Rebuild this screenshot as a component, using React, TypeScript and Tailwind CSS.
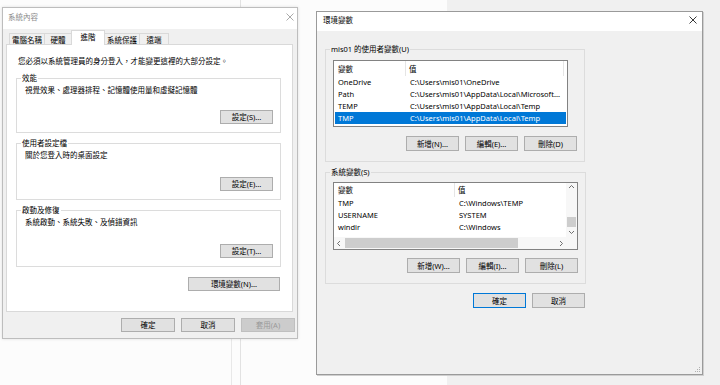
import React from "react";

type BtnKind = "normal" | "primary" | "disabled";

const btnKinds: Record<BtnKind, string> = {
  normal: "border-[#adadad] bg-[#e1e1e1] text-black",
  primary: "border-[#0078d7] bg-[#e1e1e1] text-black",
  disabled: "border-[#bfbfbf] bg-[#cccccc] text-[#9a9a9a]",
};

function Btn({
  label,
  size = "w-[54px] h-[14px]",
  kind = "normal",
}: {
  label: string;
  size?: string;
  kind?: BtnKind;
}) {
  return (
    <div className={`flex shrink-0 items-center justify-center border ${size} ${btnKinds[kind]}`}>
      {label}
    </div>
  );
}

function CloseIcon({ color }: { color: string }) {
  return (
    <svg width="8" height="8" viewBox="0 0 8 8" fill="none" stroke={color} strokeWidth="0.9">
      <path d="M0.5 0.5 L7.5 7.5 M7.5 0.5 L0.5 7.5" />
    </svg>
  );
}

function Chevron({ dir }: { dir: "up" | "down" | "left" | "right" }) {
  const d = {
    up: "M1 4 L3.5 1.5 L6 4",
    down: "M1 2 L3.5 4.5 L6 2",
    left: "M4 1 L1.5 3.5 L4 6",
    right: "M2 1 L4.5 3.5 L2 6",
  }[dir];
  return (
    <svg width="7" height="7" viewBox="0 0 7 7" fill="none" stroke="#606060" strokeWidth="0.9">
      <path d={d} />
    </svg>
  );
}

function Group({
  title,
  className,
  children,
}: {
  title: string;
  className: string;
  children: React.ReactNode;
}) {
  return (
    <fieldset className={`border border-[#dcdcdc] ${className}`}>
      <legend className="ml-[4px] px-[1px] leading-[10px]">{title}</legend>
      {children}
    </fieldset>
  );
}

const tabs = [
  { label: "電腦名稱", w: "w-[36px]" },
  { label: "硬體", w: "w-[28px]" },
  { label: "進階", w: "w-[34px]", active: true },
  { label: "系統保護", w: "w-[36px]" },
  { label: "遠端", w: "w-[30px]" },
];

function SystemProperties() {
  const sections = [
    { title: "效能", text: "視覺效果、處理器排程、記憶體使用量和虛擬記憶體", btn: "設定(S)...", box: "mt-[7px] h-[60px]", inner: "h-[49px]" },
    { title: "使用者設定檔", text: "關於您登入時的桌面設定", btn: "設定(E)...", box: "mt-[5px] h-[62px]", inner: "h-[51px]" },
    { title: "啟動及修復", text: "系統啟動、系統失敗、及偵錯資訊", btn: "設定(T)...", box: "mt-[5px] h-[62px]", inner: "h-[51px]" },
  ];
  return (
    <div className="absolute left-[2px] top-[7px] flex h-[332px] w-[296px] flex-col border border-[#bdbdbd] bg-[#f0f0f0] shadow-[0_0_3px_rgba(0,0,0,0.12)]">
      <div className="flex h-[21px] items-center justify-between bg-white pb-[4px] pl-[5px] pr-[3px] text-[#8c8c8c]">
        <span>系統內容</span>
        <CloseIcon color="#a0a0a0" />
      </div>
      <div className="mt-[1px] flex h-[15px] items-end pl-[6px]">
        {tabs.map((t) => (
          <div
            key={t.label}
            className={
              t.active
                ? `relative z-10 -ml-px flex h-[15px] items-center justify-center border border-b-0 border-[#d9d9d9] bg-white pb-[2px] ${t.w}`
                : `-ml-px flex h-[12px] items-center justify-center border border-b-0 border-[#d9d9d9] bg-[#f0f0f0] first:ml-0 ${t.w}`
            }
          >
            {t.label}
          </div>
        ))}
      </div>
      <div className="-mt-px ml-[3px] flex h-[268px] w-[287px] flex-col border border-[#d9d9d9] bg-white pl-[9px] pr-[11px]">
        <p className="mt-[11px] pl-[2px] leading-[10px]">您必須以系統管理員的身分登入，才能變更這裡的大部分設定。</p>
        {sections.map((s) => (
          <Group key={s.title} title={s.title} className={s.box}>
            <div className={`flex flex-col pb-[8px] pl-[8px] pr-[7px] ${s.inner}`}>
              <p className="mt-[2px] leading-[10px]">{s.text}</p>
              <div className="mt-auto self-end">
                <Btn label={s.btn} size="w-[53px] h-[14px]" />
              </div>
            </div>
          </Group>
        ))}
        <div className="mr-[1px] mt-[10px] self-end">
          <Btn label="環境變數(N)..." size="w-[92px] h-[14px]" />
        </div>
      </div>
      <div className="mt-[6px] flex justify-end gap-[6px] pr-[2px]">
        <Btn label="確定" />
        <Btn label="取消" />
        <Btn label="套用(A)" kind="disabled" />
      </div>
    </div>
  );
}

const userVars = [
  { name: "OneDrive", value: "C:\\Users\\mis01\\OneDrive" },
  { name: "Path", value: "C:\\Users\\mis01\\AppData\\Local\\Microsoft..." },
  { name: "TEMP", value: "C:\\Users\\mis01\\AppData\\Local\\Temp" },
  { name: "TMP", value: "C:\\Users\\mis01\\AppData\\Local\\Temp", selected: true },
];

const systemVars = [
  { name: "TMP", value: "C:\\Windows\\TEMP" },
  { name: "USERNAME", value: "SYSTEM" },
  { name: "windir", value: "C:\\Windows" },
];

function EnvironmentVariables() {
  return (
    <div className="absolute left-[316px] top-[11px] flex h-[364px] w-[387px] flex-col border border-[#9a9a9a] bg-[#f0f0f0] shadow-[1px_1px_0_#cfcfcf]">
      <div className="flex h-[19px] items-center justify-between bg-white pb-[3px] pl-[6px] pr-[5px]">
        <span>環境變數</span>
        <CloseIcon color="#222" />
      </div>
      <div className="flex flex-col pl-[8px]">
        <Group title="mis01 的使用者變數(U)" className="mt-[13px] h-[118px] w-[260px]">
          <div className="flex flex-col pl-[7px] pr-[7px]">
            <div className="mt-[6px] flex h-[67px] w-[235px] flex-col border border-[#828282] bg-white">
              <div className="flex h-[15px]">
                <div className="flex w-[72px] items-center border-r border-[#e5e5e5] pl-[4px]">變數</div>
                <div className="flex w-[158px] items-center border-r border-[#e5e5e5] pl-[3px]">值</div>
              </div>
              {userVars.map((v) => (
                <div
                  key={v.name}
                  className={`mx-[1px] flex h-[12px] items-center ${v.selected ? "bg-[#0078d7] text-white" : ""}`}
                >
                  <span className="w-[71px] pl-[3px]">{v.name}</span>
                  <span className="pl-[4px]">{v.value}</span>
                </div>
              ))}
            </div>
            <div className="mt-[9px] flex justify-end gap-[6px]">
              <Btn label="新增(N)..." size="w-[53px] h-[15px]" />
              <Btn label="編輯(E)..." size="w-[53px] h-[15px]" />
              <Btn label="刪除(D)" size="w-[53px] h-[15px]" />
            </div>
          </div>
        </Group>
        <Group title="系統變數(S)" className="mt-[5px] h-[117px] w-[260px]">
          <div className="flex flex-col pl-[7px] pr-[7px]">
            <div className="mt-[5px] flex h-[68px] w-[245px] flex-col border border-[#828282] bg-white">
              <div className="flex h-[54px]">
                <div className="flex flex-1 flex-col">
                  <div className="flex h-[14px]">
                    <div className="flex w-[121px] items-center border-r border-[#e5e5e5] pl-[4px]">變數</div>
                    <div className="flex flex-1 items-center pl-[3px]">值</div>
                  </div>
                  {systemVars.map((v) => (
                    <div key={v.name} className="flex h-[12px] items-center">
                      <span className="w-[121px] pl-[4px]">{v.name}</span>
                      <span className="pl-[4px]">{v.value}</span>
                    </div>
                  ))}
                </div>
                <div className="flex w-[11px] flex-col bg-[#f7f7f7]">
                  <div className="flex h-[9px] items-center justify-center">
                    <Chevron dir="up" />
                  </div>
                  <div className="flex flex-1 flex-col">
                    <div className="mx-[1px] mb-[1px] mt-auto h-[10px] bg-[#cdcdcd]" />
                  </div>
                  <div className="flex h-[9px] items-center justify-center">
                    <Chevron dir="down" />
                  </div>
                </div>
              </div>
              <div className="flex h-[12px]">
                <div className="flex flex-1 items-center bg-[#f7f7f7]">
                  <div className="flex w-[10px] justify-center">
                    <Chevron dir="left" />
                  </div>
                  <div className="ml-[1px] h-[10px] w-[173px] bg-[#cdcdcd]" />
                  <div className="ml-auto flex w-[10px] justify-center">
                    <Chevron dir="right" />
                  </div>
                </div>
                <div className="w-[11px] bg-[#f7f7f7]" />
              </div>
            </div>
            <div className="mt-[8px] flex justify-end gap-[6px]">
              <Btn label="新增(W)..." size="w-[53px] h-[15px]" />
              <Btn label="編輯(I)..." size="w-[53px] h-[15px]" />
              <Btn label="刪除(L)" size="w-[53px] h-[15px]" />
            </div>
          </div>
        </Group>
        <div className="mt-[9px] flex w-[260px] justify-end gap-[6px]">
          <Btn label="確定" size="w-[53px] h-[15px]" kind="primary" />
          <Btn label="取消" size="w-[53px] h-[15px]" />
        </div>
      </div>
      <div className="mb-[1px] mr-[1px] mt-auto self-end">
        <svg width="7" height="7" viewBox="0 0 7 7" fill="#b0b0b0">
          <rect x="5" y="1" width="1" height="1" />
          <rect x="3" y="3" width="1" height="1" />
          <rect x="5" y="3" width="1" height="1" />
          <rect x="1" y="5" width="1" height="1" />
          <rect x="3" y="5" width="1" height="1" />
          <rect x="5" y="5" width="1" height="1" />
        </svg>
      </div>
    </div>
  );
}

export default function App() {
  return (
    <div className="relative h-[385px] w-[720px] overflow-hidden bg-[#fcfcfc] font-['Noto_Sans','Noto_Sans_CJK_TC',sans-serif] text-[7.5px] leading-[10px] text-black">
      {/* background windows */}
      <div className="absolute bottom-0 left-[447px] right-0 top-0 bg-[#f0f0f0]" />
      <div className="absolute left-[240px] top-0 h-full w-px bg-[#e2e2e2]" />
      <div className="absolute left-[231px] top-[339px] h-[46px] w-px bg-[#e8e8e8]" />
      <SystemProperties />
      <EnvironmentVariables />
    </div>
  );
}
